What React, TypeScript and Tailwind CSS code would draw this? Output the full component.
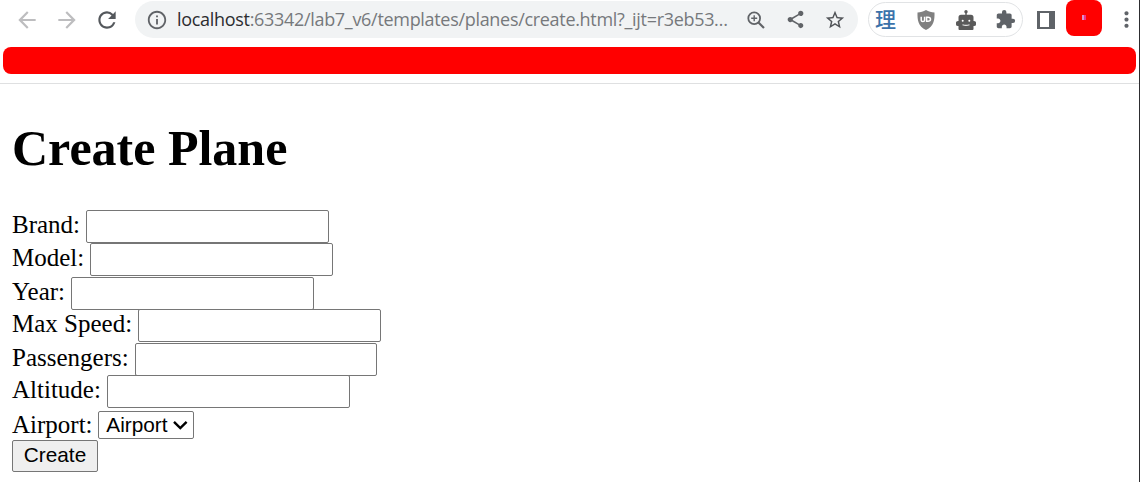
import React from "react";
import {
  MdArrowBack,
  MdArrowForward,
  MdRefresh,
  MdInfoOutline,
  MdShare,
  MdStarBorder,
  MdExtension,
  MdMoreVert,
} from "react-icons/md";

function Slot({ width, children }: { width: string; children: React.ReactNode }) {
  return <div className={`flex h-full shrink-0 items-center justify-center ${width}`}>{children}</div>;
}

function ZoomIcon() {
  return (
    <svg width="18" height="18" viewBox="0 0 18 18" fill="none" stroke="#606367" strokeWidth="1.800">
      <circle cx="7.200" cy="7.200" r="5.900" />
      <path d="M11.500 11.500 17 17" strokeWidth="2.200" />
      <path d="M4.200 7.200h6M7.200 4.200v6" strokeWidth="1.400" />
    </svg>
  );
}

function ShieldIcon() {
  return (
    <svg width="20" height="22" viewBox="0 0 20 22">
      <path d="M10 1 C12.500 2.500 15.500 3.200 18.500 3.500 C18.700 11 18 17 10 21 C2 17 1.300 11 1.500 3.500 C4.500 3.200 7.500 2.500 10 1Z" fill="#808080" />
      <path d="M5.200 7.800v3.400q0 1.400 1.700 1.400t1.700-1.400V7.800" fill="none" stroke="#fff" strokeWidth="1.500" />
      <path d="M10.600 8.300h1.300q2.600 0 2.600 2t-2.600 2h-1.300z" fill="none" stroke="#fff" strokeWidth="1.500" />
    </svg>
  );
}

function RobotIcon() {
  return (
    <svg width="20" height="20" viewBox="0 0 20 20" fill="#5a5a5a">
      <circle cx="10" cy="1.800" r="1.700" />
      <path d="M9.300 2h1.400v3H9.300z" />
      <path d="M5 4.700h10q2.500 0 2.500 2.500V11H18q2 0 2 1.500v2Q20 16 18 16h-.5v3q0 1-1 1h-13q-1 0-1-1v-3H2q-2 0-2-1.500v-2Q0 11 2 11h.5V7.200Q2.500 4.700 5 4.700Z" />
      <circle cx="6.700" cy="10.700" r="1" fill="#fff" />
      <circle cx="13.300" cy="10.700" r="1" fill="#fff" />
      <path d="M6.500 14.800q3.500 1.200 7 0" fill="none" stroke="#e8e8e8" strokeWidth="1.200" />
    </svg>
  );
}

function Toolbar() {
  return (
    <header className="h-[84px] shrink-0 border-b border-[#dfe0e1] bg-white">
      <div className="flex h-[39px] items-start">
        <div className="flex h-[39px] w-[135px] shrink-0 pl-[7px] text-[26px] text-[#bdbdbf]">
          <Slot width="w-10"><MdArrowBack /></Slot>
          <Slot width="w-10"><MdArrowForward /></Slot>
          <Slot width="w-10"><MdRefresh className="text-[#54585c]" /></Slot>
        </div>
        <div className="mt-px flex h-[37px] w-[723px] shrink-0 items-center rounded-full bg-[#f1f3f4] text-[#606367]">
          <MdInfoOutline className="ml-[11px] shrink-0 text-[22px]" />
          <div className="ml-[9px] w-[561px] shrink-0 whitespace-nowrap font-['Open_Sans','Noto_Sans',sans-serif] text-[18px] tracking-[-0.31px] text-[#76797c]">
            <span className="text-[#2b2c2f]">localhost</span>:63342/lab7_v6/templates/planes/create.html?_ijt=r3eb53…
          </div>
          <Slot width="w-[35px]"><ZoomIcon /></Slot>
          <Slot width="w-[45px]"><MdShare className="text-[21px]" /></Slot>
          <Slot width="w-[34px]"><MdStarBorder className="text-[22px] text-[#505357]" /></Slot>
        </div>
        <div className="ml-[10px] mt-[2px] flex h-[35px] w-[155px] shrink-0 items-center rounded-full border border-[#e1e3e5]">
          <div className="w-[35px] shrink-0 pb-[3px] pl-[6px] font-['Noto_Sans_CJK_SC',sans-serif] text-[21px] font-medium leading-[30px] text-[#3b72aa]">理</div>
          <Slot width="w-11"><ShieldIcon /></Slot>
          <Slot width="w-9"><RobotIcon /></Slot>
          <Slot width="w-[43px]"><MdExtension className="text-[21px] text-[#5f6368]" /></Slot>
        </div>
        <div className="ml-[14px] mt-[11px] h-[18px] w-[18px] shrink-0 border-y-2 border-l-[3px] border-r-[6px] border-[#5f6368]" />
        <div className="ml-[11px] flex h-[35.5px] w-9 shrink-0 items-center justify-center rounded-lg bg-[#ff0000]">
          <div className="h-[5px] w-1 border-l-2 border-[#d994d0] bg-[#f0308a]" />
        </div>
        <div className="ml-3 flex h-[39px] items-center text-[25px] text-[#5f6368]"><MdMoreVert /></div>
      </div>
      <div className="ml-[3px] mt-2 h-[26.5px] w-[1132.5px] rounded-lg bg-[#ff0000]" />
    </header>
  );
}

const fields = [
  { label: "Brand:", height: "h-[33px]" },
  { label: "Model:", height: "h-[34px]" },
  { label: "Year:", height: "h-[32px]" },
  { label: "Max Speed:", height: "h-[34px]" },
  { label: "Passengers:", height: "h-[32px]" },
  { label: "Altitude:", height: "h-[35px]" },
];

export default function App() {
  return (
    <div className="flex h-[482px] w-[1140px] flex-col overflow-hidden border-r border-[#2d2d30] bg-white text-black">
      <Toolbar />
      <main className="px-3 font-['Liberation_Serif',serif] text-[25px] leading-[27px]">
        <h1 className="mt-[37px] text-[50px] font-bold leading-[54px]">Create Plane</h1>
        <form className="mt-[35px]" onSubmit={(e) => e.preventDefault()}>
          {fields.map(({ label, height }) => (
            <label key={label} className={`flex items-start ${height}`}>
              <span className="mt-px whitespace-pre">{label} </span>
              <input className="h-[33px] w-[242.5px] rounded-[2px] border border-[#767676] bg-white px-[3px] font-['Liberation_Sans',sans-serif] text-[20px] outline-none" />
            </label>
          ))}
          <div className="flex h-[30px] items-start">
            <span className="mt-px whitespace-pre">Airport: </span>
            <button type="button" className="-ml-[0.5px] mt-px flex h-[28px] w-24 items-center rounded-[2px] border border-[#767676] bg-white pl-[7px] font-['Liberation_Sans',sans-serif] text-[20.8px] leading-6">
              Airport
              <svg className="ml-[5px]" width="15" height="10" viewBox="0 0 15 10" fill="none" stroke="#000" strokeWidth="2.400">
                <path d="M1 1.800 7.300 8 13.600 1.800" />
              </svg>
            </button>
          </div>
          <button type="submit" className="flex h-[32px] w-[86px] items-center justify-center rounded-[2px] border border-[#767676] bg-[#efefef] pb-[2px] font-['Liberation_Sans',sans-serif] text-[20.8px] leading-6">
            Create
          </button>
        </form>
      </main>
    </div>
  );
}
